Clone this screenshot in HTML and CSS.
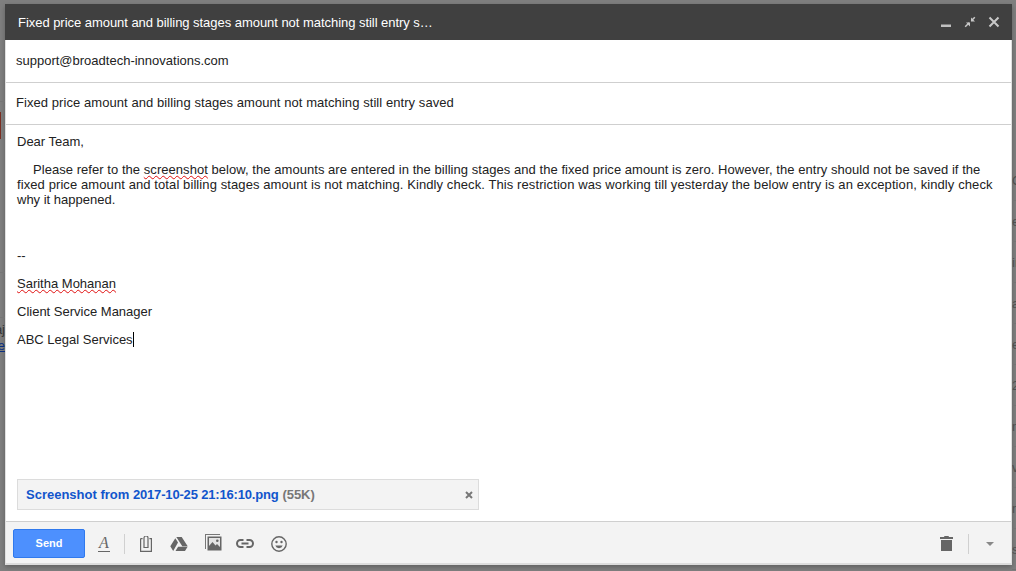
FILE: index.html
```html
<!DOCTYPE html>
<html lang="en">
<head>
<meta charset="utf-8">
<title>Compose</title>
<link rel="stylesheet" href="styles.css">
</head>
<body>
<div class="backdrop">
  <div class="behind-left">
    <span class="red-mark"></span>
    <span class="frag-dark">aj</span>
    <a class="frag-link">te</a>
  </div>
  <div class="behind-right">
    <div class="row">C</div><div class="row">e</div><div class="row">ir</div><div class="row">ai</div><div class="row">e</div><div class="row">2</div><div class="row">n</div><div class="row">v</div><div class="row">n</div><div class="row">s</div>
  </div>
  <div class="compose">
    <header class="titlebar">
      <div class="title">Fixed price amount and billing stages amount not matching still entry s…</div>
      <div class="win-controls">
        <svg class="w-icon" width="14" height="14" viewBox="0 0 14 14"><rect x="1" y="9.500" width="10" height="2.500" fill="#c0c0c0"/></svg>
        <svg class="w-icon" width="14" height="14" viewBox="0 0 14 14"><path d="M1.200 11.800l4-4M10.800 2.200l-3.500 3.500" stroke="#c8c8c8" stroke-width="1.500"/><path d="M2 7.500h4v4zM11 6.500H7v-4z" fill="#c8c8c8"/></svg>
        <svg class="w-icon" width="14" height="14" viewBox="0 0 14 14"><path d="M1.500 2.500l9 9M10.500 2.500l-9 9" stroke="#c8c8c8" stroke-width="2"/></svg>
      </div>
    </header>
    <div class="field field-to">support@broadtech-innovations.com</div>
    <div class="field field-subject">Fixed price amount and billing stages amount not matching still entry saved</div>
    <main class="message">
      <p class="line">Dear Team,</p>
      <p class="para"><span class="l1">Please refer to the <span class="spell">screenshot</span> below, the amounts are entered in the billing stages and the fixed price amount is zero. However, the entry should not be saved if the</span> <span class="l2">fixed price amount and total billing stages amount is not matching. Kindly check. This restriction was working till yesterday the below entry is an exception, kindly check</span> why it happened.</p>
      <p class="line sig-start">--</p>
      <p class="line sig"><span class="spell">Saritha Mohanan</span></p>
      <p class="line sig">Client Service Manager</p>
      <p class="line sig">ABC Legal Services<span class="caret"></span></p>
    </main>
    <div class="attachment">
      <span class="att-name">Screenshot from <span class="att-date">2017-10-25 21:16:10.png</span></span>
      <span class="att-size">(55K)</span>
      <svg class="att-x" width="8" height="8" viewBox="0 0 8 8"><path d="M1 1l6 6M7 1L1 7" stroke="#777" stroke-width="2"/></svg>
    </div>
    <footer class="toolbar">
      <button class="send">Send</button>
      <span class="format">A</span>
      <span class="sep"></span>
      <svg class="tool clip" width="12" height="16" viewBox="0 0 12 16"><path d="M.6 2.600h2M9.400 2.600h2v12.800H.6V2.600" fill="none" stroke="#666" stroke-width="1.200"/><path d="M4 11.500V2a2 2 0 0 1 4 0v9.500z" fill="none" stroke="#666" stroke-width="1.200"/></svg>
      <svg class="tool drive" width="18" height="14" viewBox="0 0 18 14"><path d="M6.300 0h5.400l6 9.200h-5.400zM5.300 1.300l2.700 4.300L3.200 14 .3 9.300zM8.100 9.800h9.500L15 14H5.500z" fill="#666"/></svg>
      <svg class="tool photo" width="17" height="17" viewBox="0 0 17 17"><path d="M0 0h15v1H1v14H0z" fill="#777"/><rect x="2.500" y="2.500" width="14" height="14" fill="#666"/><rect x="4" y="4" width="11" height="11" fill="#e4e4e4"/><path d="M4 15v-3l3.500-4 3 3.500 1.500-1.500 3 3v2z" fill="#666"/><circle cx="12.300" cy="6.800" r="1.300" fill="#666"/></svg>
      <svg class="tool link" width="18" height="9" viewBox="0 0 18 9"><path d="M7.500 1H4.500a3.500 3.500 0 0 0 0 7h3M10.500 1h3a3.500 3.500 0 0 1 0 7h-3M5.500 4.500h7" fill="none" stroke="#666" stroke-width="2"/></svg>
      <svg class="tool smile" width="16" height="16" viewBox="0 0 16 16"><circle cx="8" cy="8" r="7.200" fill="none" stroke="#666" stroke-width="1.400"/><circle cx="5.500" cy="6" r="1.200" fill="#666"/><circle cx="10.500" cy="6" r="1.200" fill="#666"/><path d="M4.300 9.500h7.400A3.900 3.900 0 0 1 4.300 9.500z" fill="#666"/></svg>
      <span class="spacer"></span>
      <svg class="tool trash" width="13" height="15" viewBox="0 0 13 15"><path d="M4.500 0h4l.5 1h4v2H0V1h4zM1 4h11v11H1z" fill="#666"/></svg>
      <span class="sep sep-right"></span>
      <svg class="tool more" width="8" height="4" viewBox="0 0 8 4"><path d="M0 0h8L4 4z" fill="#888"/></svg>
    </footer>
  </div>
</div>
</body>
</html>
```

FILE: styles.css
```css
* { box-sizing: border-box; }
html, body { margin: 0; height: 100%; }
body {
  font-family: "Liberation Sans", Arial, sans-serif;
  background: #7f7f7f;
  overflow: hidden;
}
.backdrop {
  position: relative;
  width: 1016px;
  height: 571px;
  padding: 4px 4px 6px 5px;
  display: flex;
  overflow: hidden;
}
.behind-left {
  position: absolute;
  left: 0;
  top: 0;
  width: 5px;
  height: 571px;
  overflow: hidden;
  font-size: 13px;
  line-height: 15px;
  color: #333;
  background: linear-gradient(#757575, #757575) 0 101px / 5px 1px no-repeat,
    linear-gradient(#757575, #757575) 0 272px / 5px 1px no-repeat,
    linear-gradient(#757575, #757575) 0 317px / 5px 1px no-repeat;
}
.red-mark {
  position: absolute;
  left: 0;
  top: 112px;
  width: 1px;
  height: 27px;
  background: #7a2e22;
}
.frag-dark, .frag-link {
  position: absolute;
  right: 0;
  white-space: nowrap;
}
.frag-dark { top: 322px; }
.frag-link { top: 338px; color: #0b2f80; text-decoration: underline; }
.behind-right {
  position: absolute;
  left: 1012px;
  top: 160px;
  width: 4px;
  overflow: hidden;
  font-size: 13px;
  color: #4f4f4f;
}
.row {
  height: 41px;
  border-bottom: 1px solid #747474;
  line-height: 41px;
  white-space: nowrap;
}
.compose {
  width: 1007px;
  height: 561px;
  background: #fff;
  display: flex;
  flex-direction: column;
  border-left: 1px solid #e0e0e0;
  border-right: 1px solid #e0e0e0;
  border-bottom: 2px solid #dcdcdc;
  box-shadow: 0 2px 5px rgba(0, 0, 0, .25);
}
.titlebar {
  height: 36px;
  margin: 0 -1px;
  flex: none;
  background: #404040;
  color: #fff;
  display: flex;
  align-items: center;
  padding: 0 10px 0 13px;
  font-size: 13px;
  justify-content: space-between;
}
.title { letter-spacing: -.04px; }
.win-controls { display: flex; gap: 10px; }
.w-icon { display: block; }
.field {
  flex: none;
  border-bottom: 1px solid #cfcfcf;
  font-size: 13px;
  color: #222;
  padding: 13px 0 0 10px;
  line-height: 15px;
}
.field-to { height: 43px; }
.field-subject { height: 42px; padding-top: 12px; letter-spacing: .067px; }
.message {
  flex: 1;
  padding: 9px 11px 0 11px;
  font-size: 13px;
  line-height: 15px;
  color: #222;
}
.message p { margin: 0; }
.message .para { margin-top: 13px; text-indent: 16px; }
.l1 { letter-spacing: .048px; }
.l2 { letter-spacing: .095px; }
.message .sig-start { margin-top: 41px; }
.message .sig { margin-top: 13px; }
.spell {
  text-decoration: underline wavy #e01010;
  text-decoration-thickness: 1px;
  text-underline-offset: 1px;
}
.caret {
  display: inline-block;
  width: 1px;
  height: 15px;
  background: #000;
  vertical-align: -3px;
}
.attachment {
  flex: none;
  height: 31px;
  margin: 0 0 11px 11px;
  width: 462px;
  background: #f3f3f3;
  border: 1px solid #dcdcdc;
  display: flex;
  align-items: center;
  padding: 0 5px 0 8px;
  font-size: 13px;
  font-weight: bold;
}
.att-name { color: #1155cc; }
.att-date { letter-spacing: -.17px; }
.att-size { color: #777; margin-left: 4px; letter-spacing: -.1px; }
.att-x { margin-left: auto; }
.toolbar {
  flex: none;
  height: 42px;
  background: #f3f3f3;
  border-top: 1px solid #cfcfcf;
  display: flex;
  align-items: center;
  padding: 2px 17px 0 7px;
}
.send {
  width: 72px;
  height: 29px;
  padding: 0 0 2px;
  background: #4d90fe;
  border: 1px solid #3079ed;
  border-radius: 2px;
  color: #fff;
  font: bold 11px "Liberation Sans", Arial, sans-serif;
}
.format {
  margin-left: 13px;
  width: 12px;
  font: italic 16px/16px "Liberation Serif", serif;
  color: #666;
  border-bottom: 1px solid #666;
  text-align: center;
}
.sep {
  width: 1px;
  height: 20px;
  background: #d0d0d0;
  margin-left: 14px;
}
.tool { display: block; flex: none; }
.clip { margin-left: 15px; }
.drive { margin-left: 18px; }
.photo { margin-left: 17px; margin-top: -3px; }
.link { margin-left: 14px; margin-top: -1px; }
.smile { margin-left: 17px; }
.spacer { flex: 1; }
.sep-right { margin-left: 15px; }
.more { margin-left: 17px; }
```
